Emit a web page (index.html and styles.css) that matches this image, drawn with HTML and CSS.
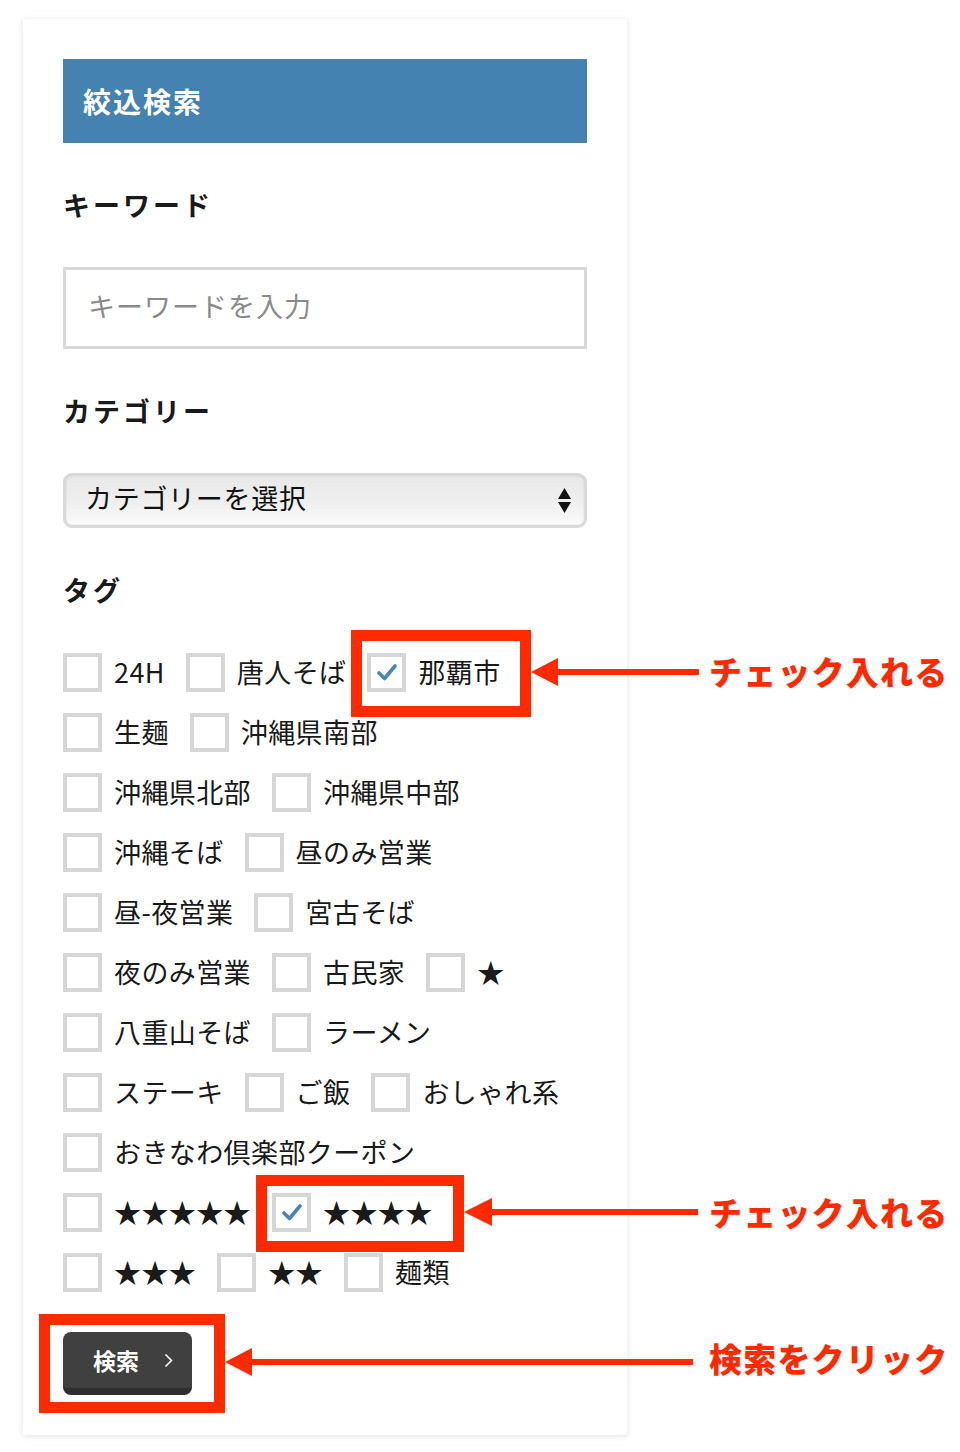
FILE: index.html
```html
<!DOCTYPE html>
<html lang="ja">
<head>
<meta charset="utf-8">
<title>絞込検索</title>
<link rel="stylesheet" href="styles.css">
</head>
<body>
<div class="page">
  <form class="card">
    <div class="card-title">絞込検索</div>

    <h3 class="section-title">キーワード</h3>
    <input class="keyword" type="text" placeholder="キーワードを入力">

    <h3 class="section-title">カテゴリー</h3>
    <div class="select">
      <span class="select-text">カテゴリーを選択</span>
      <svg class="select-arrows" width="13" height="25" viewBox="0 0 13 25"><path d="M0 11 L6.5 0 L13 11 Z M0 14 L13 14 L6.5 25 Z" fill="#111"/></svg>
    </div>

    <h3 class="section-title section-title--tags">タグ</h3>
    <div class="tags">
      <div class="tag-row">
        <label class="tag"><span class="box"></span><span class="tag-label">24H</span></label>
        <label class="tag"><span class="box"></span><span class="tag-label">唐人そば</span></label>
        <label class="tag"><span class="box box--checked"><svg width="20" height="18" viewBox="0 0 20 18"><path d="M2 10 L7.5 15.5 L18 3" fill="none" stroke="#4a84b8" stroke-width="3.6" stroke-linecap="round" stroke-linejoin="round"/></svg></span><span class="tag-label">那覇市</span></label>
      </div>
      <div class="tag-row">
        <label class="tag"><span class="box"></span><span class="tag-label">生麺</span></label>
        <label class="tag"><span class="box"></span><span class="tag-label">沖縄県南部</span></label>
      </div>
      <div class="tag-row">
        <label class="tag"><span class="box"></span><span class="tag-label">沖縄県北部</span></label>
        <label class="tag"><span class="box"></span><span class="tag-label">沖縄県中部</span></label>
      </div>
      <div class="tag-row">
        <label class="tag"><span class="box"></span><span class="tag-label">沖縄そば</span></label>
        <label class="tag"><span class="box"></span><span class="tag-label">昼のみ営業</span></label>
      </div>
      <div class="tag-row">
        <label class="tag"><span class="box"></span><span class="tag-label">昼-夜営業</span></label>
        <label class="tag"><span class="box"></span><span class="tag-label">宮古そば</span></label>
      </div>
      <div class="tag-row">
        <label class="tag"><span class="box"></span><span class="tag-label">夜のみ営業</span></label>
        <label class="tag"><span class="box"></span><span class="tag-label">古民家</span></label>
        <label class="tag"><span class="box"></span><span class="tag-label">★</span></label>
      </div>
      <div class="tag-row">
        <label class="tag"><span class="box"></span><span class="tag-label">八重山そば</span></label>
        <label class="tag"><span class="box"></span><span class="tag-label">ラーメン</span></label>
      </div>
      <div class="tag-row">
        <label class="tag"><span class="box"></span><span class="tag-label">ステーキ</span></label>
        <label class="tag"><span class="box"></span><span class="tag-label">ご飯</span></label>
        <label class="tag"><span class="box"></span><span class="tag-label">おしゃれ系</span></label>
      </div>
      <div class="tag-row">
        <label class="tag"><span class="box"></span><span class="tag-label">おきなわ倶楽部クーポン</span></label>
      </div>
      <div class="tag-row">
        <label class="tag"><span class="box"></span><span class="tag-label">★★★★★</span></label>
        <label class="tag"><span class="box box--checked"><svg width="20" height="18" viewBox="0 0 20 18"><path d="M2 10 L7.5 15.5 L18 3" fill="none" stroke="#4a84b8" stroke-width="3.6" stroke-linecap="round" stroke-linejoin="round"/></svg></span><span class="tag-label">★★★★</span></label>
      </div>
      <div class="tag-row">
        <label class="tag"><span class="box"></span><span class="tag-label">★★★</span></label>
        <label class="tag"><span class="box"></span><span class="tag-label">★★</span></label>
        <label class="tag"><span class="box"></span><span class="tag-label">麺類</span></label>
      </div>
    </div>

    <button class="search-btn" type="button">
      <span>検索</span>
      <svg width="9" height="15" viewBox="0 0 9 15"><path d="M1.5 1.5 L7.5 7.5 L1.5 13.5" fill="none" stroke="#fff" stroke-width="1.6"/></svg>
    </button>
  </form>

  <div class="mark mark--1"></div>
  <div class="mark mark--2"></div>
  <div class="mark mark--3"></div>

  <svg class="arrow arrow--1" width="168" height="32" viewBox="0 0 168 32"><polygon points="0,16 27,2 27,30" fill="#ff2a00"/><rect x="20" y="13" width="148" height="6" fill="#ff2a00"/></svg>
  <svg class="arrow arrow--2" width="234" height="32" viewBox="0 0 234 32"><polygon points="0,16 28,2 28,30" fill="#ff2a00"/><rect x="20" y="13" width="214" height="6" fill="#ff2a00"/></svg>
  <svg class="arrow arrow--3" width="468" height="32" viewBox="0 0 468 32"><polygon points="0,16 27,2 27,30" fill="#ff2a00"/><rect x="20" y="13" width="448" height="6" fill="#ff2a00"/></svg>

  <div class="note note--1">チェック入れる</div>
  <div class="note note--2">チェック入れる</div>
  <div class="note note--3">検索をクリック</div>
</div>
</body>
</html>
```

FILE: styles.css
```css
html, body {
  margin: 0;
  padding: 0;
  background: #fff;
}

body {
  font-family: "Noto Sans CJK JP", "Noto Sans", sans-serif;
  color: #1a1a1a;
}

.page {
  position: relative;
  width: 960px;
  height: 1452px;
  overflow: hidden;
}

.card {
  box-sizing: border-box;
  width: 604px;
  margin: 19px 0 0 23px;
  padding: 40px;
  background: #fff;
  box-shadow: 0 1px 6px rgba(0, 0, 0, 0.13);
}

.card-title {
  display: flex;
  align-items: center;
  height: 84px;
  padding-left: 20px;
  background: #4482b1;
  color: #fff;
  font-size: 28px;
  font-weight: 700;
  letter-spacing: 2px;
}

.section-title {
  margin: 42px 0;
  font-size: 27px;
  line-height: 40px;
  font-weight: 700;
  letter-spacing: 3px;
  color: #1a1a1a;
}

.section-title--tags {
  margin-bottom: 32px;
}

.keyword {
  display: block;
  box-sizing: border-box;
  width: 100%;
  height: 82px;
  margin: 0;
  padding: 0 0 6px 22px;
  border: 3px solid #d8d8d8;
  border-radius: 0;
  outline: none;
  font-family: inherit;
  font-size: 27px;
  letter-spacing: 1px;
  color: #1a1a1a;
  background: #fff;
}

.keyword::placeholder {
  color: #8a8a8a;
}

.select {
  display: flex;
  align-items: center;
  justify-content: space-between;
  box-sizing: border-box;
  height: 55px;
  padding: 0 13px 0 19px;
  border: 3px solid #d9d9d9;
  border-radius: 9px;
  background: linear-gradient(to bottom, #e9e9e9 0%, #eeeeee 50%, #fbfbfb 100%);
  box-shadow: inset 0 0 2px rgba(0, 0, 0, 0.12);
}

.select-text {
  padding-bottom: 6px;
  font-size: 27px;
  line-height: 1;
  letter-spacing: 0.7px;
  color: #111;
}

.select-arrows {
  display: block;
}

.tags {
  display: flex;
  flex-direction: column;
}

.tag-row {
  display: flex;
  align-items: center;
  gap: 21px;
  height: 60px;
}

.tag {
  display: flex;
  align-items: center;
  gap: 12px;
}

.box {
  display: flex;
  align-items: center;
  justify-content: center;
  box-sizing: border-box;
  width: 39px;
  height: 39px;
  border: 4px solid #d6d6d6;
  background: #fff;
}

.tag-label {
  padding-bottom: 2px;
  font-size: 27px;
  line-height: 1;
  letter-spacing: 0.4px;
  color: #1a1a1a;
}

.search-btn {
  display: flex;
  align-items: center;
  gap: 25px;
  box-sizing: border-box;
  width: 129px;
  height: 63px;
  margin-top: 30px;
  padding: 0 0 0 30px;
  border: 0;
  border-bottom: 7px solid #2e2e2e;
  border-radius: 8px;
  background: #404040;
  color: #fff;
  font-family: inherit;
  font-size: 23px;
  font-weight: 700;
  cursor: pointer;
}

.mark {
  position: absolute;
  box-sizing: border-box;
  border: 11px solid #ff2a00;
}

.mark--1 { left: 351px; top: 630px; width: 180px; height: 87px; }
.mark--2 { left: 256px; top: 1175px; width: 208px; height: 77px; }
.mark--3 { left: 39px; top: 1314px; width: 186px; height: 99px; }

.arrow {
  position: absolute;
  display: block;
}

.arrow--1 { left: 531px; top: 656px; }
.arrow--2 { left: 464px; top: 1196px; }
.arrow--3 { left: 225px; top: 1346px; }

.note {
  position: absolute;
  left: 709px;
  font-size: 33px;
  line-height: 34px;
  font-weight: 900;
  letter-spacing: 1.2px;
  color: #ff2a00;
  white-space: nowrap;
}

.note--1 { top: 654px; }
.note--2 { top: 1195px; }
.note--3 { top: 1341px; }
```
